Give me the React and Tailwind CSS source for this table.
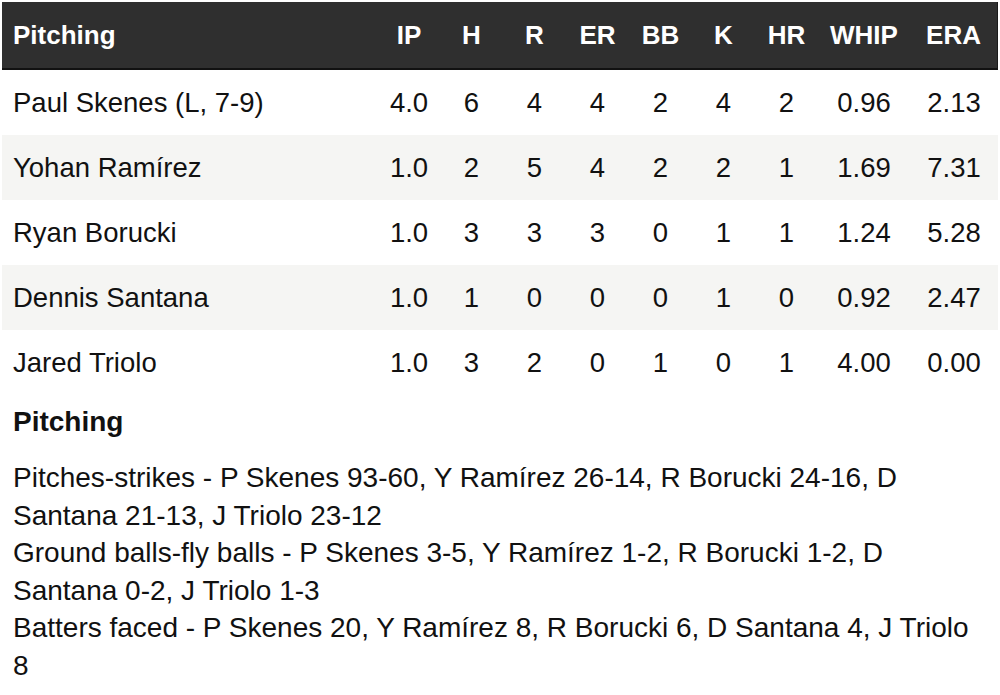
const pitchers = [
  { name: "Paul Skenes (L, 7-9)", ip: "4.0", h: "6", r: "4", er: "4", bb: "2", k: "4", hr: "2", whip: "0.96", era: "2.13" },
  { name: "Yohan Ramírez", ip: "1.0", h: "2", r: "5", er: "4", bb: "2", k: "2", hr: "1", whip: "1.69", era: "7.31" },
  { name: "Ryan Borucki", ip: "1.0", h: "3", r: "3", er: "3", bb: "0", k: "1", hr: "1", whip: "1.24", era: "5.28" },
  { name: "Dennis Santana", ip: "1.0", h: "1", r: "0", er: "0", bb: "0", k: "1", hr: "0", whip: "0.92", era: "2.47" },
  { name: "Jared Triolo", ip: "1.0", h: "3", r: "2", er: "0", bb: "1", k: "0", hr: "1", whip: "4.00", era: "0.00" },
];

const cols = ["ip", "h", "r", "er", "bb", "k", "hr", "whip", "era"];
const heads = ["IP", "H", "R", "ER", "BB", "K", "HR", "WHIP", "ERA"];

const grid = "grid grid-cols-[376px_62px_63px_63px_63px_63px_63px_63px_92px_1fr] items-center";

export default function App() {
  return (
    <div className="bg-white text-[#111] px-[2px] pt-[2px] text-[28px]" style={{ fontFamily: '"Liberation Sans", Arial, sans-serif' }}>
      <div className={`${grid} h-[68px] bg-[#2f2f2f] text-white text-[26px] font-bold border-b-2 border-[#111] border-r border-r-[#1a1a1a]`}>
        <div className="pl-[11px]">Pitching</div>
        {heads.map((h) => (
          <div key={h} className="text-center">{h}</div>
        ))}
      </div>
      {pitchers.map((p, i) => (
        <div key={p.name} className={`${grid} h-[65px] text-[27.5px] ${i % 2 === 1 ? "bg-[#f5f5f3]" : "bg-white"}`}>
          <div className="pl-[11px]">{p.name}</div>
          {cols.map((c) => (
            <div key={c} className="text-center">{p[c]}</div>
          ))}
        </div>
      ))}
      <div className="pl-[11px] pr-[12px]">
        <h3 className="font-bold mt-[12px] mb-[22px] leading-[30px]">Pitching</h3>
        <p className="leading-[37.6px]">Pitches-strikes - P Skenes 93-60, Y Ramírez 26-14, R Borucki 24-16, D Santana 21-13, J Triolo 23-12</p>
        <p className="leading-[37.6px]">Ground balls-fly balls - P Skenes 3-5, Y Ramírez 1-2, R Borucki 1-2, D Santana 0-2, J Triolo 1-3</p>
        <p className="leading-[37.6px]">Batters faced - P Skenes 20, Y Ramírez 8, R Borucki 6, D Santana 4, J Triolo 8</p>
      </div>
    </div>
  );
}
